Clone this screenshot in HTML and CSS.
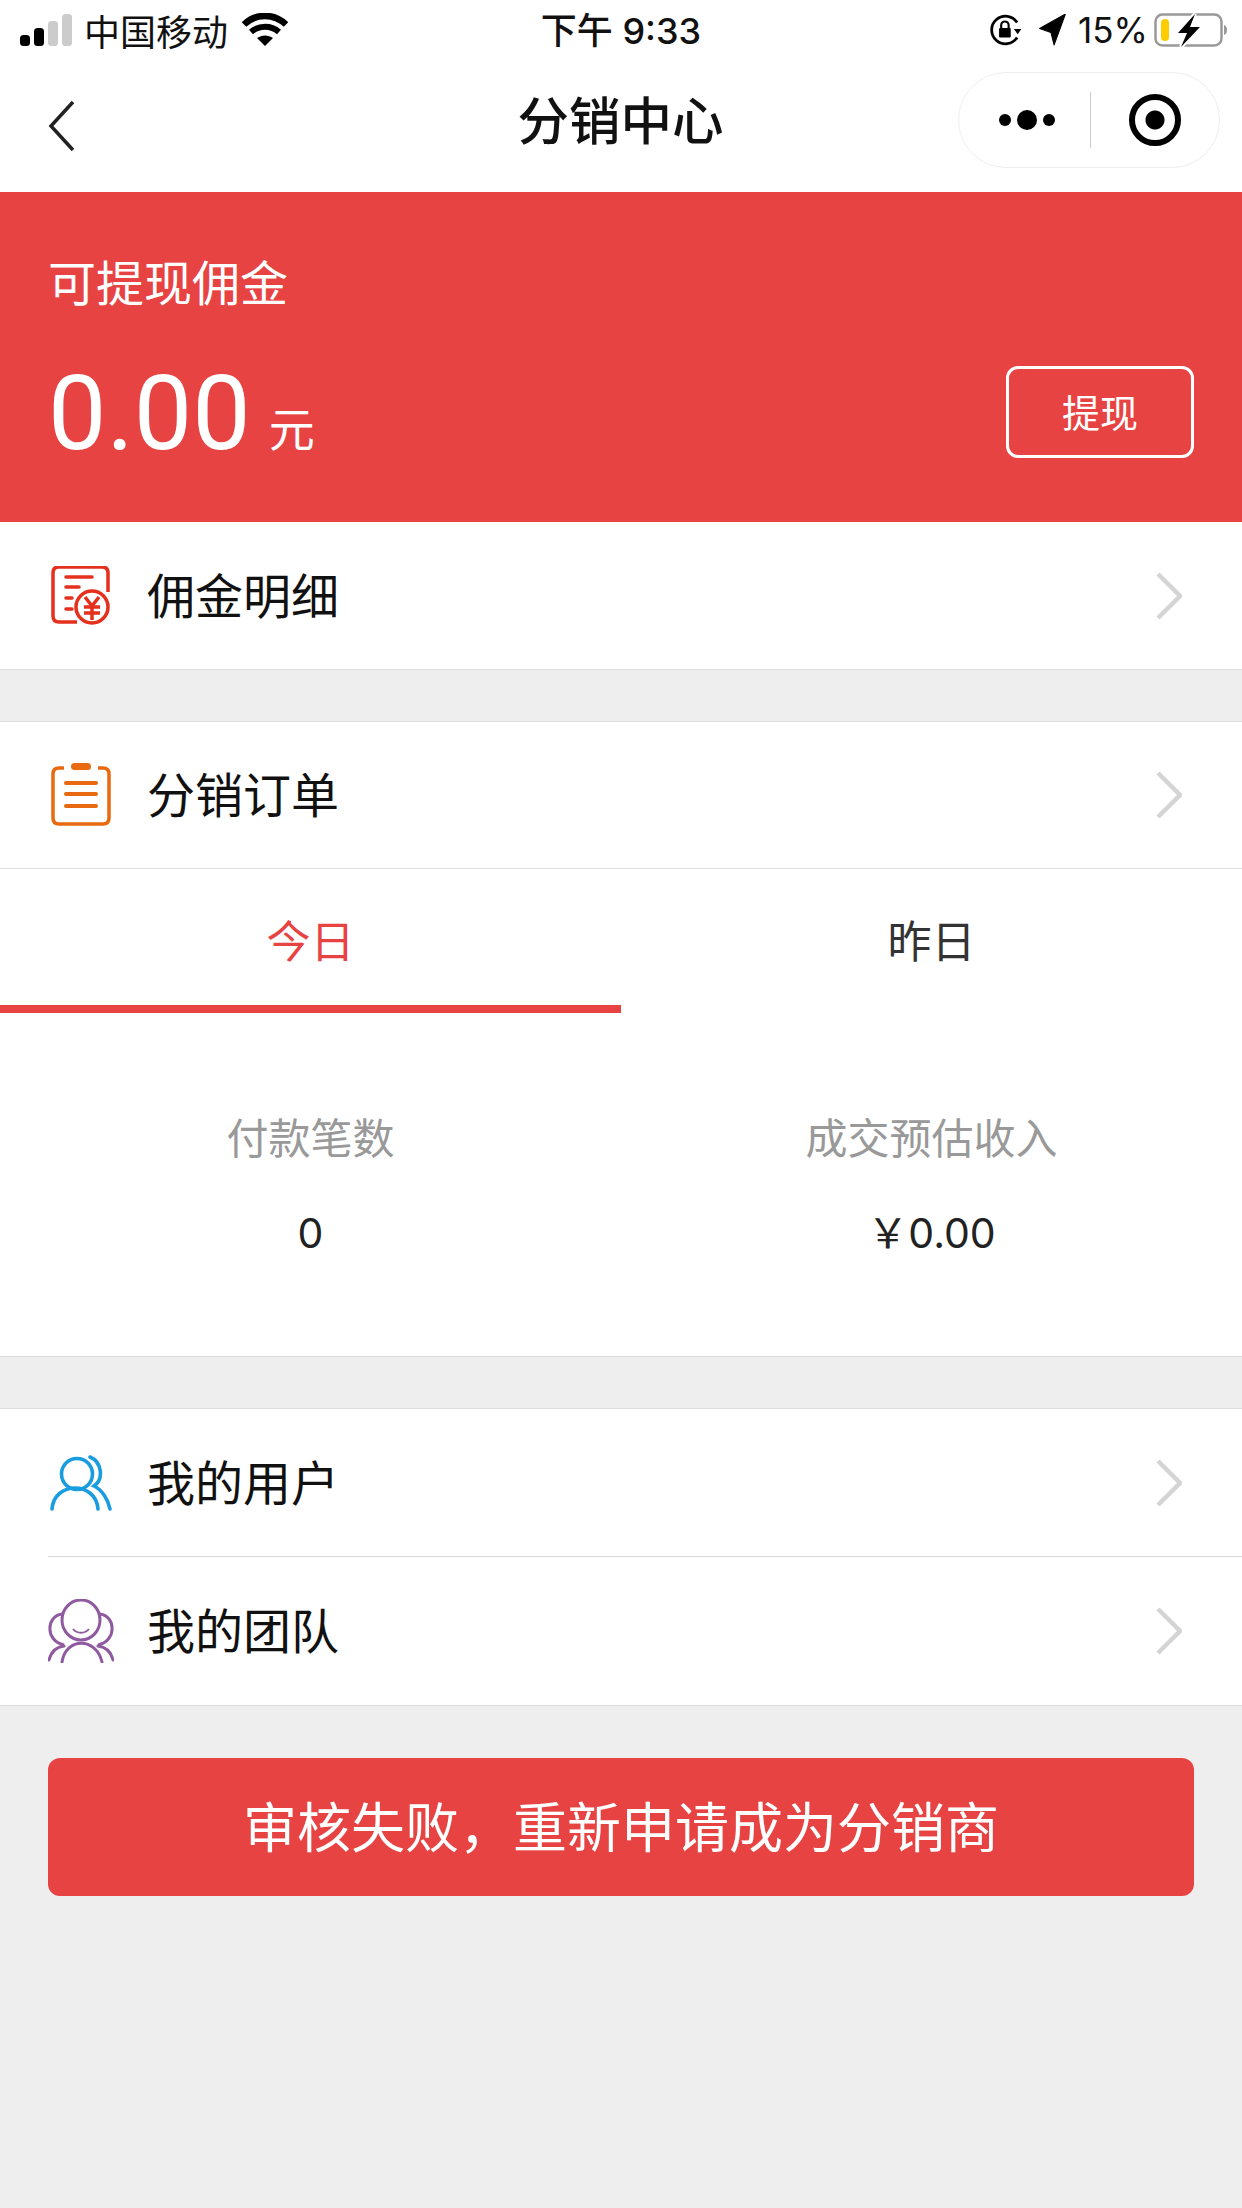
FILE: index.html
```html
<!DOCTYPE html>
<html lang="zh-CN">
    <head>
        <meta charset="UTF-8">
        <meta name="viewport" content="width=device-width, initial-scale=1.0">
        <title>分销中心</title>
        <link rel="stylesheet" href="styles.css">
    </head>
    <body>
        <div class="status-bar">
            <div class="status-left">
                <svg class="signal" width="54" height="32" viewBox="0 0 54 32">
                    <rect x="0" y="21" width="10" height="11" rx="3.5" fill="#000"/>
                    <rect x="14" y="14" width="10" height="18" rx="3.5" fill="#000"/>
                    <rect x="28" y="7" width="10" height="25" rx="3.5" fill="#ccc"/>
                    <rect x="42" y="0" width="10" height="32" rx="3.5" fill="#ccc"/>
                </svg>
                <span class="carrier">中国移动</span>
                <svg class="wifi" width="46" height="34" viewBox="0 0 46 34">
                    <path d="M2 11.500 C14 0 32 0 44 11.500" fill="none" stroke="#000" stroke-width="6.500"/>
                    <path d="M9 19 C17 12 29 12 37 19" fill="none" stroke="#000" stroke-width="6"/>
                    <path d="M15 25 C20 21.500 26 21.500 31 25 L23 33 Z" fill="#000"/>
                </svg>
            </div>
            <div class="status-time">下午 9:33</div>
            <div class="status-right">
                <svg width="33" height="34" viewBox="0 0 30 32">
                    <path d="M25 23 A13 13 0 1 1 25 9" fill="none" stroke="#000" stroke-width="2.600"/>
                    <path d="M22 15 L29 15 L25.500 20 Z" fill="#000"/>
                    <rect x="8" y="14" width="11" height="9" rx="1" fill="#000"/>
                    <path d="M10 14 V11.500 A3.500 3.500 0 0 1 17 11.500 V14" fill="none" stroke="#000" stroke-width="2"/>
                </svg>
                <svg class="arrow" width="29" height="32" viewBox="0 0 25 31">
                    <path d="M0 14 L25 0 L14 30 L11 18 Z" fill="#000" stroke="#000" stroke-width="1" stroke-linejoin="round"/>
                </svg>
                <span class="battery-text">15%</span>
                <svg class="battery" width="74" height="34" viewBox="0 0 74 34">
                    <rect x="1.500" y="1.500" width="66" height="31" rx="7" fill="none" stroke="#999" stroke-width="2.500"/>
                    <rect x="7" y="6" width="8" height="22" rx="4" fill="#fc0"/>
                    <path d="M70 12 C74 13 74 21 70 22 Z" fill="#999"/>
                    <path d="M41 1 L24 20 L33 20 L27 34 L46 14 L36 14 L41 1 Z" fill="#fff" stroke="#fff" stroke-width="4"/>
                    <path d="M41 1 L24 20 L33 20 L27 34 L46 14 L36 14 Z" fill="#000"/>
                </svg>
            </div>
        </div>

        <div class="nav-bar">
            <svg class="back" width="28" height="52" viewBox="0 0 28 52">
                <path d="M25 2 L3 26 L25 50" fill="none" stroke="#222" stroke-width="3.500"/>
            </svg>
            <div class="nav-title">分销中心</div>
            <div class="capsule">
                <div class="capsule-dots">
                    <span class="dot"></span>
                    <span class="dot dot-big"></span>
                    <span class="dot"></span>
                </div>
                <div class="capsule-line"></div>
                <div class="capsule-target"><span></span></div>
            </div>
        </div>

        <div class="balance">
            <div class="balance-label">可提现佣金</div>
            <div class="balance-row">
                <div class="balance-amount">0.00<small>元</small></div>
                <button class="withdraw">提现</button>
            </div>
        </div>

        <div class="row row-single">
            <svg class="row-icon" width="60" height="60" viewBox="0 0 60 60">
                <path d="M26 56 H8 Q2 56 2 50 V7 Q2 1 8 1 H51 Q57 1 57 7 V26" fill="none" stroke="#e4301c" stroke-width="3.500"/>
                <path d="M15 11 H41 M15 21 H28 M15 32 H21 M15 43 H21" stroke="#e4301c" stroke-width="3.500" stroke-linecap="round"/>
                <circle cx="41" cy="41" r="16" fill="#fff" stroke="#e4301c" stroke-width="3.500"/>
                <path d="M34 31 L41 40 L48 31 M33 41 H49 M33 47 H49 M41 40 V54" fill="none" stroke="#e4301c" stroke-width="3.500"/>
            </svg>
            <span class="row-text">佣金明细</span>
            <svg class="chevron" width="26" height="48" viewBox="0 0 26 48">
                <path d="M2 2 L24 24 L2 46" fill="none" stroke="#d4d4d4" stroke-width="4.500"/>
            </svg>
        </div>

        <div class="row row-gap">
            <svg class="row-icon" width="60" height="64" viewBox="0 0 60 64">
                <path d="M13 5 H8 Q2 5 2 11 V55 Q2 61 8 61 H52 Q58 61 58 55 V11 Q58 5 52 5 H47" fill="none" stroke="#e8690f" stroke-width="3.500"/>
                <rect x="20" y="0" width="20" height="7" rx="3.500" fill="#e8690f"/>
                <path d="M15 20 H45 M15 31 H45 M15 43 H45" stroke="#e8690f" stroke-width="4" stroke-linecap="round"/>
            </svg>
            <span class="row-text">分销订单</span>
            <svg class="chevron" width="26" height="48" viewBox="0 0 26 48">
                <path d="M2 2 L24 24 L2 46" fill="none" stroke="#d4d4d4" stroke-width="4.500"/>
            </svg>
        </div>

        <div class="tabs">
            <div class="tab tab-on">今日</div>
            <div class="tab">昨日</div>
        </div>
        <div class="stats">
            <div class="stat">
                <div class="stat-label">付款笔数</div>
                <div class="stat-value">0</div>
            </div>
            <div class="stat">
                <div class="stat-label">成交预估收入</div>
                <div class="stat-value">￥0.00</div>
            </div>
        </div>

        <div class="group">
            <div class="row row-inner">
                <svg class="row-icon" width="62" height="56" viewBox="0 0 62 56">
                    <circle cx="27" cy="19" r="15.500" fill="none" stroke="#1a9ddf" stroke-width="3.600"/>
                    <path d="M2 54 C4 26 46 26 48 54" fill="none" stroke="#1a9ddf" stroke-width="3.600" stroke-linecap="round"/>
                    <path d="M40 2 C52 7 54 24 44 31 C52 35 58 44 60 54" fill="none" stroke="#1a9ddf" stroke-width="3.600" stroke-linecap="round"/>
                </svg>
                <span class="row-text">我的用户</span>
                <svg class="chevron" width="26" height="48" viewBox="0 0 26 48">
                    <path d="M2 2 L24 24 L2 46" fill="none" stroke="#d4d4d4" stroke-width="4.500"/>
                </svg>
            </div>
            <div class="row">
                <svg class="row-icon" width="66" height="64" viewBox="0 0 66 64">
                    <ellipse cx="33" cy="21" rx="19" ry="20" fill="none" stroke="#8f5a9f" stroke-width="3"/>
                    <path d="M25 30 C29 35 37 35 41 30" fill="none" stroke="#8f5a9f" stroke-width="2"/>
                    <path d="M14 15 C-2 17 -3 42 16 46 M52 15 C68 17 69 42 50 46" fill="none" stroke="#8f5a9f" stroke-width="3"/>
                    <path d="M14 63 C18 38 48 38 54 63" fill="none" stroke="#8f5a9f" stroke-width="3" stroke-linecap="round"/>
                    <path d="M1 61 C3 53 8 48 16 47 M65 61 C63 53 58 48 50 47" fill="none" stroke="#8f5a9f" stroke-width="3" stroke-linecap="round"/>
                </svg>
                <span class="row-text">我的团队</span>
                <svg class="chevron" width="26" height="48" viewBox="0 0 26 48">
                    <path d="M2 2 L24 24 L2 46" fill="none" stroke="#d4d4d4" stroke-width="4.500"/>
                </svg>
            </div>
        </div>

        <button class="apply">审核失败，重新申请成为分销商</button>
    </body>
</html>
```

FILE: styles.css
```css
* {
    box-sizing: border-box;
}

html, body {
    height: 100%;
}

body {
    margin: 0;
    background-color: #eee;
    font-family: "Inter", "Noto Sans CJK SC", sans-serif;
    color: #000;
}

button {
    font-family: inherit;
    color: #fff;
    background: none;
    border: none;
    padding: 0;
}

/* status bar */
.status-bar {
    height: 60px;
    background-color: #fff;
    display: flex;
    align-items: center;
    justify-content: space-between;
    padding: 0 14px 0 20px;
}

.status-left, .status-right {
    width: 400px;
    display: flex;
    align-items: center;
}

.status-right {
    justify-content: flex-end;
}

.carrier {
    font-size: 36px;
    margin-left: 10px;
    color: #111;
}

.wifi {
    margin-left: 14px;
}

.status-time {
    font-size: 36px;
    font-weight: 500;
    color: #111;
    margin-bottom: 4px;
    margin-right: 6px;
}

.arrow {
    margin-left: 15px;
}

.battery-text {
    font-size: 35px;
    margin-left: 11px;
    margin-right: 6px;
    color: #111;
}

/* nav */
.nav-bar {
    height: 132px;
    background-color: #fff;
    display: flex;
    align-items: center;
    justify-content: space-between;
    padding: 0 22px 12px 48px;
}

.back {
    margin-top: 12px;
}

.nav-title {
    font-size: 51.500px;
    font-weight: 500;
    color: #111;
    margin-left: 207px;
    margin-bottom: 5px;
}

.capsule {
    width: 262px;
    height: 96px;
    border: 1.5px solid #eee;
    border-radius: 48px;
    display: flex;
    align-items: center;
}

.capsule-dots {
    flex: 1;
    display: flex;
    align-items: center;
    justify-content: center;
    gap: 6px;
    padding-left: 4px;
}

.dot {
    width: 12px;
    height: 12px;
    background-color: #000;
    border-radius: 50%;
}

.dot-big {
    width: 20px;
    height: 20px;
}

.capsule-line {
    width: 1px;
    height: 56px;
    background-color: #ccc;
}

.capsule-target {
    flex: 1;
    display: flex;
    align-items: center;
    justify-content: center;
}

.capsule-target span {
    width: 52px;
    height: 52px;
    border: 6px solid #000;
    border-radius: 50%;
    display: block;
    background: radial-gradient(circle, #000 0, #000 9px, #fff 10px);
}

/* balance */
.balance {
    height: 330px;
    background-color: #e84343;
    color: #fff;
    padding: 64px 48px 0 48px;
}

.balance-label {
    font-size: 48px;
    line-height: 56px;
}

.balance-row {
    display: flex;
    align-items: center;
    justify-content: space-between;
    margin-top: 24px;
}

.balance-amount {
    font-family: "Roboto", "Noto Sans CJK SC", sans-serif;
    font-size: 104px;
    font-weight: 400;
    line-height: 116px;
    margin-top: 20px;
}

.balance-amount small {
    font-size: 46px;
    font-weight: 400;
    margin-left: 18px;
    vertical-align: 3px;
}

.withdraw {
    width: 188px;
    height: 92px;
    border: 3px solid #fff;
    border-radius: 12px;
    font-size: 38px;
    padding-bottom: 4px;
}

/* rows */
.row {
    height: 148px;
    background-color: #fff;
    display: flex;
    align-items: center;
    padding: 0 60px 0 48px;
    position: relative;
}

.row-single {
    border-bottom: 1.5px solid #ddd;
}

.row-gap {
    margin-top: 51px;
    border-top: 1.5px solid #ddd;
    border-bottom: 1.5px solid #ddd;
}

.row-icon {
    width: 66px;
    flex: none;
}

.row-text {
    font-size: 48px;
    margin-left: 33px;
    padding-bottom: 6px;
    flex: 1;
    color: #111;
}

/* line under the first row stops short of the icon edge */
.row-inner::after {
    content: "";
    position: absolute;
    left: 48px;
    right: 0;
    bottom: -2px;
    height: 3px;
    background-color: #d6d6d6;
}

/* tabs */
.tabs {
    display: flex;
    background-color: #fff;
    height: 144px;
}

.tab {
    flex: 1;
    font-size: 44px;
    line-height: 147px;
    text-align: center;
    color: #333;
}

.tab-on {
    color: #e84343;
    border-bottom: 8px solid #e84343;
}

/* stats */
.stats {
    display: flex;
    height: 344px;
    background-color: #fff;
    border-bottom: 1.5px solid #ddd;
    padding-top: 101px;
}

.stat {
    flex: 1;
    text-align: center;
}

.stat-label {
    font-size: 42px;
    line-height: 50px;
    color: #999;
}

.stat-value {
    font-size: 41px;
    line-height: 50px;
    margin-top: 44px;
    color: #222;
}

.group {
    margin-top: 51px;
    border-top: 1.5px solid #ddd;
    border-bottom: 1.5px solid #ddd;
}

.apply {
    display: block;
    margin: 52px 48px 0;
    width: 1146px;
    height: 138px;
    background-color: #e84343;
    border-radius: 12px;
    font-size: 54px;
    padding-bottom: 6px;
}
```
